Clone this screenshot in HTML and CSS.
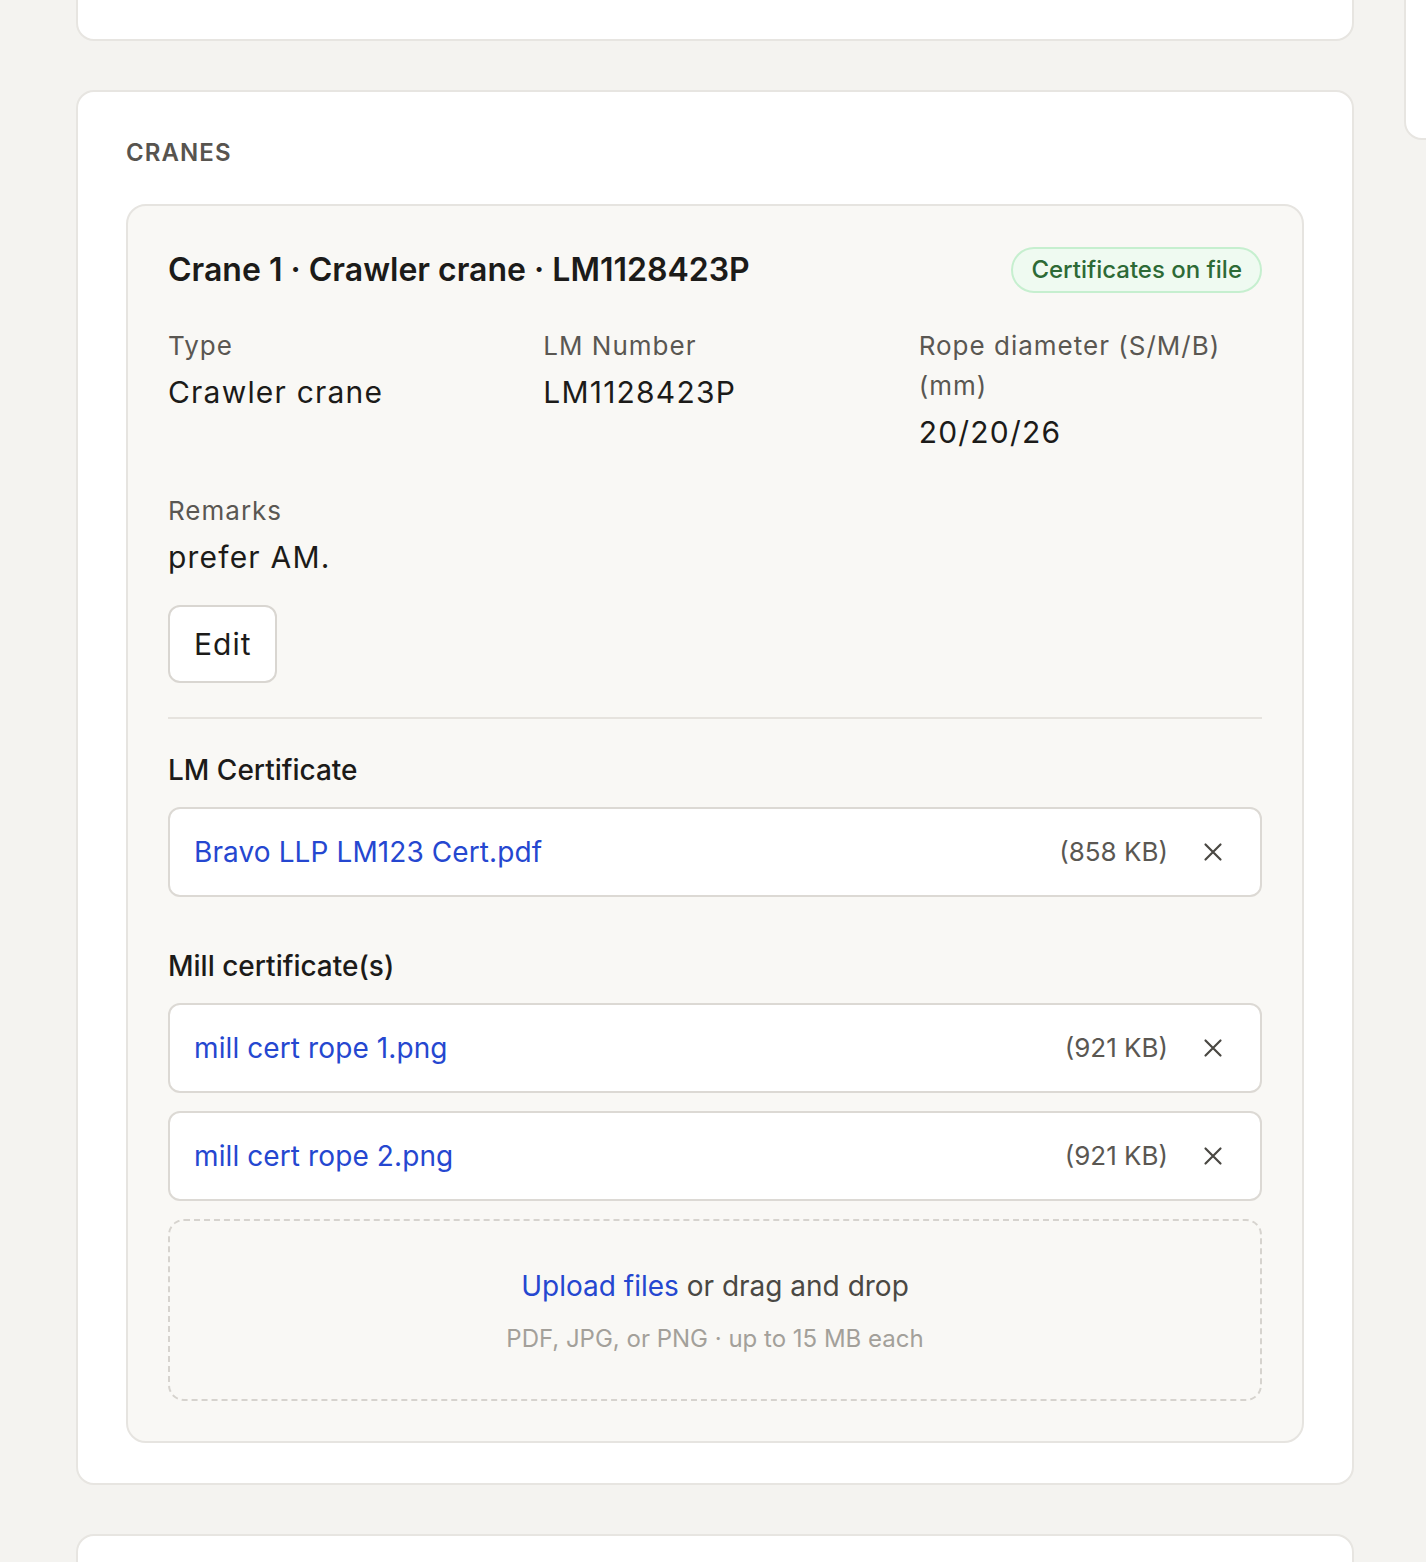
FILE: index.html
```html
<!DOCTYPE html>
<html lang="en">
<head>
<meta charset="utf-8">
<title>Cranes</title>
<link rel="stylesheet" href="styles.css">
</head>
<body>
<div class="page">
  <main class="main">
    <section class="card card-top"></section>

    <section class="card">
      <h2 class="section-title">CRANES</h2>
      <div class="crane">
        <div class="crane-head">
          <h3 class="crane-title">Crane 1 · Crawler crane · LM1128423P</h3>
          <span class="badge">Certificates on file</span>
        </div>

        <div class="fields">
          <div class="field">
            <div class="label">Type</div>
            <div class="value">Crawler crane</div>
          </div>
          <div class="field">
            <div class="label">LM Number</div>
            <div class="value">LM1128423P</div>
          </div>
          <div class="field">
            <div class="label">Rope diameter (S/M/B) (mm)</div>
            <div class="value">20/20/26</div>
          </div>
          <div class="field">
            <div class="label">Remarks</div>
            <div class="value">prefer AM.</div>
          </div>
        </div>

        <button class="btn" type="button">Edit</button>

        <div class="docs">
          <div class="doc-group">
            <div class="doc-label">LM Certificate</div>
            <div class="file-list">
              <div class="file">
                <a class="file-name" href="#">Bravo LLP LM123 Cert.pdf</a>
                <span class="file-size">(858 KB)</span>
                <button class="file-remove" type="button" aria-label="Remove">
                  <svg viewBox="0 0 20 20" width="20" height="20"><path d="M2.5 2.5L17.5 17.5M17.5 2.5L2.5 17.5" fill="none" stroke="currentColor" stroke-width="2.2" stroke-linecap="round"/></svg>
                </button>
              </div>
            </div>
          </div>

          <div class="doc-group">
            <div class="doc-label">Mill certificate(s)</div>
            <div class="file-list">
              <div class="file">
                <a class="file-name" href="#">mill cert rope 1.png</a>
                <span class="file-size">(921 KB)</span>
                <button class="file-remove" type="button" aria-label="Remove">
                  <svg viewBox="0 0 20 20" width="20" height="20"><path d="M2.5 2.5L17.5 17.5M17.5 2.5L2.5 17.5" fill="none" stroke="currentColor" stroke-width="2.2" stroke-linecap="round"/></svg>
                </button>
              </div>
              <div class="file">
                <a class="file-name" href="#">mill cert rope 2.png</a>
                <span class="file-size">(921 KB)</span>
                <button class="file-remove" type="button" aria-label="Remove">
                  <svg viewBox="0 0 20 20" width="20" height="20"><path d="M2.5 2.5L17.5 17.5M17.5 2.5L2.5 17.5" fill="none" stroke="currentColor" stroke-width="2.2" stroke-linecap="round"/></svg>
                </button>
              </div>
              <div class="dropzone">
                <div class="drop-main"><a class="drop-link" href="#">Upload files</a> or drag and drop</div>
                <div class="drop-sub">PDF, JPG, or PNG · up to 15 MB each</div>
              </div>
            </div>
          </div>
        </div>
      </div>
    </section>

    <section class="card card-bottom"></section>
  </main>
  <aside class="side">
    <div class="card card-side"></div>
  </aside>
</div>
</body>
</html>
```

FILE: styles.css
```css
* { box-sizing: border-box; }

html, body {
  margin: 0;
  padding: 0;
  overflow: hidden;
  background: #f4f3f0;
  font-family: Inter, "Noto Sans", "Liberation Sans", sans-serif;
  color: #1c1b19;
}

.page {
  display: flex;
  gap: 50px;
  padding-left: 76px;
  margin-top: -159px;
}

.main {
  width: 1278px;
  flex: none;
  display: flex;
  flex-direction: column;
  gap: 49px;
}

.side {
  width: 400px;
  flex: none;
}

.card {
  background: #ffffff;
  border: 2px solid #e7e5e1;
  border-radius: 18px;
  padding: 42px 48px 40px;
}

.card-top { height: 200px; }
.card-bottom { height: 200px; }
.card-side { height: 299px; padding: 0; }

.section-title {
  margin: 0 0 32px;
  font-size: 24px;
  line-height: 38px;
  font-weight: 600;
  letter-spacing: 0.045em;
  color: #57544f;
}

.crane {
  background: #f9f8f5;
  border: 2px solid #e6e4e0;
  border-radius: 20px;
  padding: 41px 40px 40px;
}

.crane-head {
  display: flex;
  align-items: center;
  justify-content: space-between;
}

.crane-title {
  margin: 0;
  font-size: 32px;
  line-height: 46px;
  font-weight: 600;
  color: #1c1b19;
}

.badge {
  display: inline-block;
  padding: 4px 18px;
  font-size: 24px;
  line-height: 34px;
  font-weight: 500;
  color: #2d6a36;
  background: #effaf1;
  border: 2px solid #c6efcf;
  border-radius: 999px;
}

.fields {
  margin-top: 33px;
  display: grid;
  grid-template-columns: repeat(3, 1fr);
  column-gap: 32px;
  row-gap: 38px;
}

.label {
  font-size: 26px;
  line-height: 40px;
  letter-spacing: 1px;
  color: #5a5752;
}

.value {
  margin-top: 5px;
  font-size: 30px;
  line-height: 42px;
  letter-spacing: 1.2px;
  color: #1c1b19;
}

.btn {
  margin-top: 27px;
  display: inline-flex;
  align-items: center;
  height: 78px;
  font-family: inherit;
  font-size: 30px;
  line-height: 42px;
  letter-spacing: 1px;
  padding: 0 24px;
  color: #1c1b19;
  background: #ffffff;
  border: 2px solid #d9d6d1;
  border-radius: 12px;
}

.docs {
  margin-top: 34px;
  border-top: 2px solid #e6e3de;
  padding-top: 30px;
  display: flex;
  flex-direction: column;
  gap: 48px;
}

.doc-label {
  font-size: 28px;
  line-height: 42px;
  font-weight: 500;
  color: #1c1b19;
  margin-bottom: 16px;
}

.file-list {
  display: flex;
  flex-direction: column;
  gap: 18px;
}

.file {
  display: flex;
  align-items: center;
  gap: 25px;
  height: 90px;
  padding: 0 27px 0 24px;
  background: #ffffff;
  border: 2px solid #dcd9d4;
  border-radius: 12px;
}

.file-name {
  flex: 1;
  font-size: 28px;
  line-height: 40px;
  letter-spacing: 0.1px;
  color: #2547d0;
  text-decoration: none;
}

.file-size {
  font-size: 26px;
  line-height: 36px;
  color: #5a5752;
}

.file-remove {
  width: 40px;
  height: 40px;
  padding: 0;
  display: flex;
  align-items: center;
  justify-content: center;
  background: none;
  border: 0;
  color: #4a4843;
}

.dropzone {
  border: 2px dashed #d6d3ce;
  border-radius: 16px;
  padding: 45px 24px 42px;
  text-align: center;
}

.drop-main {
  font-size: 28px;
  line-height: 40px;
  color: #4a4843;
}

.drop-link {
  color: #2547d0;
  text-decoration: none;
}

.drop-sub {
  margin-top: 15px;
  font-size: 24px;
  line-height: 36px;
  color: #a3a09a;
}
```
